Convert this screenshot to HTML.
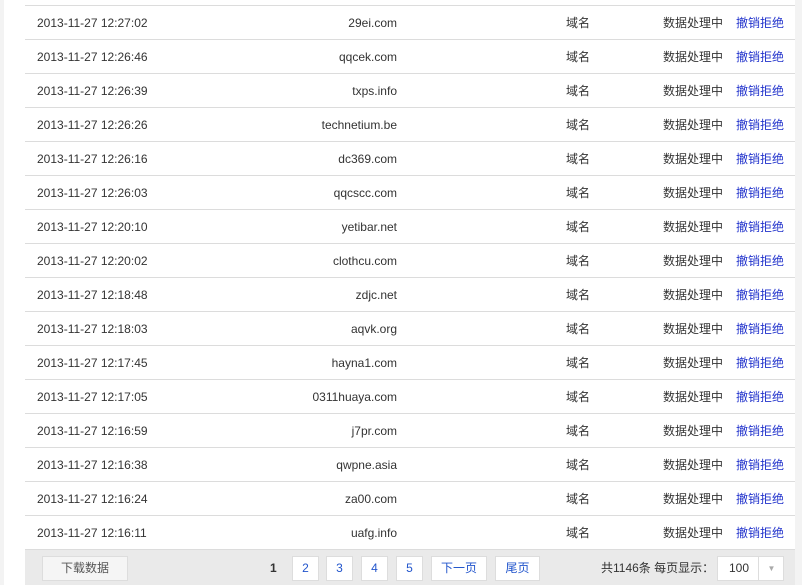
<!DOCTYPE html>
<html><head><meta charset="utf-8"><style>
*{margin:0;padding:0;box-sizing:border-box}
body{width:802px;height:585px;overflow:hidden;background:#f3f3f3;font-family:"Liberation Sans","Noto Sans CJK SC",sans-serif;font-size:12px;color:#333;position:relative}
.panel{position:absolute;left:4px;top:0;width:791px;height:585px;background:#fff}
.row{position:absolute;left:25px;width:770px;height:34px;border-top:1px solid #dcdcdc;line-height:34px}
.row span{position:absolute;top:0}
.d{left:12px}
.row .n{right:398px;text-align:right}
.t{left:541px}.s{left:638px}.a{left:711px;color:#2233cc}
.foot{position:absolute;left:25px;top:549px;width:770px;height:36px;background:#eaeaea;border-top:1px solid #dcdcdc}
.b{position:absolute;top:6px;height:25px;background:#fff;border:1px solid #ddd;text-align:center;line-height:23px;color:#2255cc}
</style></head><body>
<div class="panel"></div>
<div class="row" style="top:5px"><span class="d">2013-11-27 12:27:02</span><span class="n">29ei.com</span><span class="t">域名</span><span class="s">数据处理中</span><span class="a">撤销拒绝</span></div>
<div class="row" style="top:39px"><span class="d">2013-11-27 12:26:46</span><span class="n">qqcek.com</span><span class="t">域名</span><span class="s">数据处理中</span><span class="a">撤销拒绝</span></div>
<div class="row" style="top:73px"><span class="d">2013-11-27 12:26:39</span><span class="n">txps.info</span><span class="t">域名</span><span class="s">数据处理中</span><span class="a">撤销拒绝</span></div>
<div class="row" style="top:107px"><span class="d">2013-11-27 12:26:26</span><span class="n">technetium.be</span><span class="t">域名</span><span class="s">数据处理中</span><span class="a">撤销拒绝</span></div>
<div class="row" style="top:141px"><span class="d">2013-11-27 12:26:16</span><span class="n">dc369.com</span><span class="t">域名</span><span class="s">数据处理中</span><span class="a">撤销拒绝</span></div>
<div class="row" style="top:175px"><span class="d">2013-11-27 12:26:03</span><span class="n">qqcscc.com</span><span class="t">域名</span><span class="s">数据处理中</span><span class="a">撤销拒绝</span></div>
<div class="row" style="top:209px"><span class="d">2013-11-27 12:20:10</span><span class="n">yetibar.net</span><span class="t">域名</span><span class="s">数据处理中</span><span class="a">撤销拒绝</span></div>
<div class="row" style="top:243px"><span class="d">2013-11-27 12:20:02</span><span class="n">clothcu.com</span><span class="t">域名</span><span class="s">数据处理中</span><span class="a">撤销拒绝</span></div>
<div class="row" style="top:277px"><span class="d">2013-11-27 12:18:48</span><span class="n">zdjc.net</span><span class="t">域名</span><span class="s">数据处理中</span><span class="a">撤销拒绝</span></div>
<div class="row" style="top:311px"><span class="d">2013-11-27 12:18:03</span><span class="n">aqvk.org</span><span class="t">域名</span><span class="s">数据处理中</span><span class="a">撤销拒绝</span></div>
<div class="row" style="top:345px"><span class="d">2013-11-27 12:17:45</span><span class="n">hayna1.com</span><span class="t">域名</span><span class="s">数据处理中</span><span class="a">撤销拒绝</span></div>
<div class="row" style="top:379px"><span class="d">2013-11-27 12:17:05</span><span class="n">0311huaya.com</span><span class="t">域名</span><span class="s">数据处理中</span><span class="a">撤销拒绝</span></div>
<div class="row" style="top:413px"><span class="d">2013-11-27 12:16:59</span><span class="n">j7pr.com</span><span class="t">域名</span><span class="s">数据处理中</span><span class="a">撤销拒绝</span></div>
<div class="row" style="top:447px"><span class="d">2013-11-27 12:16:38</span><span class="n">qwpne.asia</span><span class="t">域名</span><span class="s">数据处理中</span><span class="a">撤销拒绝</span></div>
<div class="row" style="top:481px"><span class="d">2013-11-27 12:16:24</span><span class="n">za00.com</span><span class="t">域名</span><span class="s">数据处理中</span><span class="a">撤销拒绝</span></div>
<div class="row" style="top:515px"><span class="d">2013-11-27 12:16:11</span><span class="n">uafg.info</span><span class="t">域名</span><span class="s">数据处理中</span><span class="a">撤销拒绝</span></div>
<div class="foot">
<div class="b" style="left:17px;width:86px;background:#f5f5f5;color:#555">下载数据</div>
<span style="position:absolute;left:245px;top:6px;line-height:25px;font-weight:bold">1</span>
<div class="b" style="left:267px;width:27px">2</div>
<div class="b" style="left:301px;width:27px">3</div>
<div class="b" style="left:336px;width:27px">4</div>
<div class="b" style="left:371px;width:27px">5</div>
<div class="b" style="left:406px;width:56px">下一页</div>
<div class="b" style="left:470px;width:45px">尾页</div>
<span style="position:absolute;left:576px;top:6px;line-height:25px">共1146条 每页显示：</span>
<div class="b" style="left:692px;width:67px;color:#333;text-align:left;padding-left:11px">100<span style="position:absolute;left:40px;top:0;width:26px;height:23px;border-left:1px solid #ddd;color:#aaa;text-align:center;font-size:8px">▼</span></div>
</div>
</body></html>
